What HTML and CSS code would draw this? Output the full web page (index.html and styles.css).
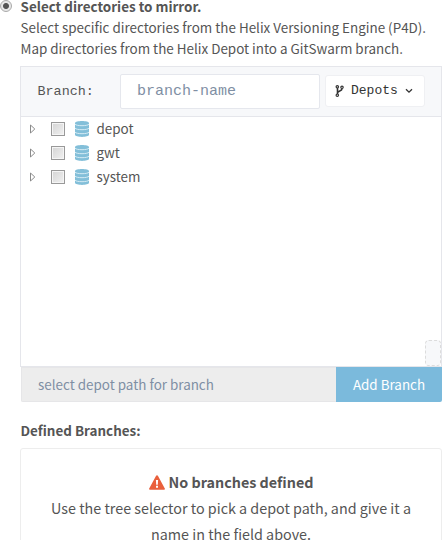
FILE: index.html
```html
<!DOCTYPE html>
<html lang="en">
<head>
<meta charset="utf-8">
<title>Mirror directories</title>
<link rel="stylesheet" href="styles.css">
</head>
<body>
<main class="option">
  <span class="radio"></span>
  <section class="content">
    <div class="intro">
      <div class="title">Select directories to mirror.</div>
      <div>Select specific directories from the Helix Versioning Engine (P4D).</div>
      <div>Map directories from the Helix Depot into a GitSwarm branch.</div>
    </div>
    <div class="picker">
      <div class="toolbar">
        <span class="label">Branch:</span>
        <div class="name-field">branch-name</div>
        <div class="depots">
          <svg class="fork" viewBox="0 0 9 12"><path d="M2.500 1.500v9M7 2.500v1.200c0 2.600-4.500 1.800-4.500 4.300" fill="none" stroke="currentColor" stroke-width="1.600"/><g fill="#fff" stroke="currentColor" stroke-width="1.200"><circle cx="2.300" cy="1.800" r="1.200"/><circle cx="7" cy="2.300" r="1.200"/><circle cx="2.300" cy="10.200" r="1.200"/></g></svg>
          <span>Depots</span>
          <svg class="chevron" viewBox="0 0 8 6"><path d="M1 1.200l3 3 3-3" fill="none" stroke="currentColor" stroke-width="1.300"/></svg>
        </div>
      </div>
      <ul class="tree">
        <li><svg class="arrow" viewBox="0 0 6 10"><path d="M.5 1v8l4.300-4z" fill="#fff" stroke="#8b8b8b"/></svg><span class="check"></span><svg class="db" viewBox="0 0 14 16"><path d="M0 2.200C0-.6 14-.6 14 2.200v11.600c0 2.800-14 2.800-14 0z" fill="#83bfd9"/><path d="M0 3.200c1.500 2 12.500 2 14 0M0 7.200c1.500 2 12.500 2 14 0M0 11.200c1.500 2 12.500 2 14 0" fill="none" stroke="#d5ebf4"/></svg><span class="leaf">depot</span></li>
        <li><svg class="arrow" viewBox="0 0 6 10"><path d="M.5 1v8l4.300-4z" fill="#fff" stroke="#8b8b8b"/></svg><span class="check"></span><svg class="db" viewBox="0 0 14 16"><path d="M0 2.200C0-.6 14-.6 14 2.200v11.600c0 2.800-14 2.800-14 0z" fill="#83bfd9"/><path d="M0 3.200c1.500 2 12.500 2 14 0M0 7.200c1.500 2 12.500 2 14 0M0 11.200c1.500 2 12.500 2 14 0" fill="none" stroke="#d5ebf4"/></svg><span class="leaf">gwt</span></li>
        <li><svg class="arrow" viewBox="0 0 6 10"><path d="M.5 1v8l4.300-4z" fill="#fff" stroke="#8b8b8b"/></svg><span class="check"></span><svg class="db" viewBox="0 0 14 16"><path d="M0 2.200C0-.6 14-.6 14 2.200v11.600c0 2.800-14 2.800-14 0z" fill="#83bfd9"/><path d="M0 3.200c1.500 2 12.500 2 14 0M0 7.200c1.500 2 12.500 2 14 0M0 11.200c1.500 2 12.500 2 14 0" fill="none" stroke="#d5ebf4"/></svg><span class="leaf">system</span></li>
      </ul>
      <span class="handle"></span>
    </div>
    <div class="path-row">
      <div class="path">select depot path for branch</div>
      <div class="add">Add Branch</div>
    </div>
    <div class="heading">Defined Branches:</div>
    <div class="empty">
      <div class="empty-title"><svg class="warn" viewBox="0 0 16 15"><path d="M8 .2c.4 0 .7.200.9.600l6.900 12.700c.4.700 0 1.300-.8 1.300H1c-.8 0-1.200-.6-.8-1.300L7.100.8c.2-.4.5-.6.9-.6z" fill="#e9603c"/><path d="M6.900 5h2.200l-.3 4.700H7.200zM7 10.700h2v2H7z" fill="#fff"/></svg><span>No branches defined</span></div>
      <div class="empty-text">Use the tree selector to pick a depot path, and give it a<br>name in the field above.</div>
    </div>
  </section>
</main>
</body>
</html>
```
FILE: styles.css
```css
* { box-sizing: border-box; }
body {
  margin: 0;
  height: 540px;
  overflow: hidden;
  background: #fff;
  color: #555;
  font: 13.430px/21px "Noto Sans CJK SC", sans-serif;
}
.option { display: flex; align-items: flex-start; }
.radio {
  flex: none;
  width: 12px;
  height: 12px;
  margin: 0 8px 0 0;
  border: 1px solid #aaa;
  border-radius: 50%;
  background: radial-gradient(circle, #555 0 2.500px, #e8e8e8 3.500px);
}
.content { width: 422px; flex: none; white-space: nowrap; }
.intro { height: 66px; padding-left: .5px; margin-top: -4px; margin-bottom: 4px; }
.title, .heading, .empty-title { font-weight: bold; }
.picker {
  position: relative;
  height: 301px;
  border: 1px solid #e5e6eb;
}
.toolbar {
  display: flex;
  align-items: center;
  height: 50px;
  padding-left: 16px;
  background: #f7f8fa;
  border-bottom: 1px solid #e5e6eb;
  font: 13.430px/20px "Liberation Mono", monospace;
}
.label { width: 82.500px; margin-left: .5px; }
.name-field {
  width: 200px;
  height: 35px;
  padding: 0 16px;
  border: 1px solid #e5e7ed;
  border-radius: 2px;
  background: #fff;
  color: #7f8fa4;
  font-size: 15px;
  line-height: 33px;
}
.depots {
  display: flex;
  align-items: center;
  width: 100px;
  height: 32px;
  margin-left: 5px;
  margin-top: -1px;
  padding: 0 0 1px 9px;
  border: 1px solid #eff0f3;
  border-radius: 3px;
  background: #fff;
  color: #333;
  font-size: 13px;
}
.fork { width: 9px; height: 12px; margin-right: 7px; }
.chevron { width: 8px; height: 6px; margin-left: 7.500px; }
.tree { list-style: none; margin: 0; padding: 0 0 0 9px; }
.tree li { display: flex; align-items: center; height: 24px; }
.leaf { padding-bottom: 2px; }
.arrow { width: 6px; height: 10px; margin-right: 15px; }
.check {
  width: 14px;
  height: 14px;
  border: 1px solid #999;
  background: linear-gradient(135deg, #d4d4d4, #f1f1f1);
  box-shadow: inset 0 0 0 1px #f5f5f5;
}
.db { width: 14px; height: 16px; margin: 0 7.500px 0 10px; }
.handle {
  position: absolute;
  right: 0;
  bottom: 0;
  width: 16px;
  height: 26px;
  border: 1px dashed #dcdcdc;
  border-radius: 4px;
  background: #f7f8fa;
}
.path-row { display: flex; height: 35px; margin-left: 1px; line-height: 35px; }
.path {
  width: 315px;
  padding-left: 16px;
  border: 1px solid #e6e6e8;
  border-right: 0;
  border-radius: 0 0 0 2px;
  background: #ededed;
  color: #7f8fa4;
  line-height: 33px;
}
.add {
  width: 106px;
  background: #7bbadc;
  color: #fff;
  text-align: center;
  border-radius: 0 0 2px 0;
}
.heading { height: 46px; padding: 18px 0 0 .5px; }
.empty {
  height: 110px;
  padding-top: 20px;
  border: 1px solid #ededed;
  border-radius: 3px;
  text-align: center;
  font-size: 14.330px;
  line-height: 26px;
}
.empty-title { display: flex; justify-content: center; align-items: center; height: 26px; }
.warn { width: 16px; height: 15px; margin-right: 4px; }
```
